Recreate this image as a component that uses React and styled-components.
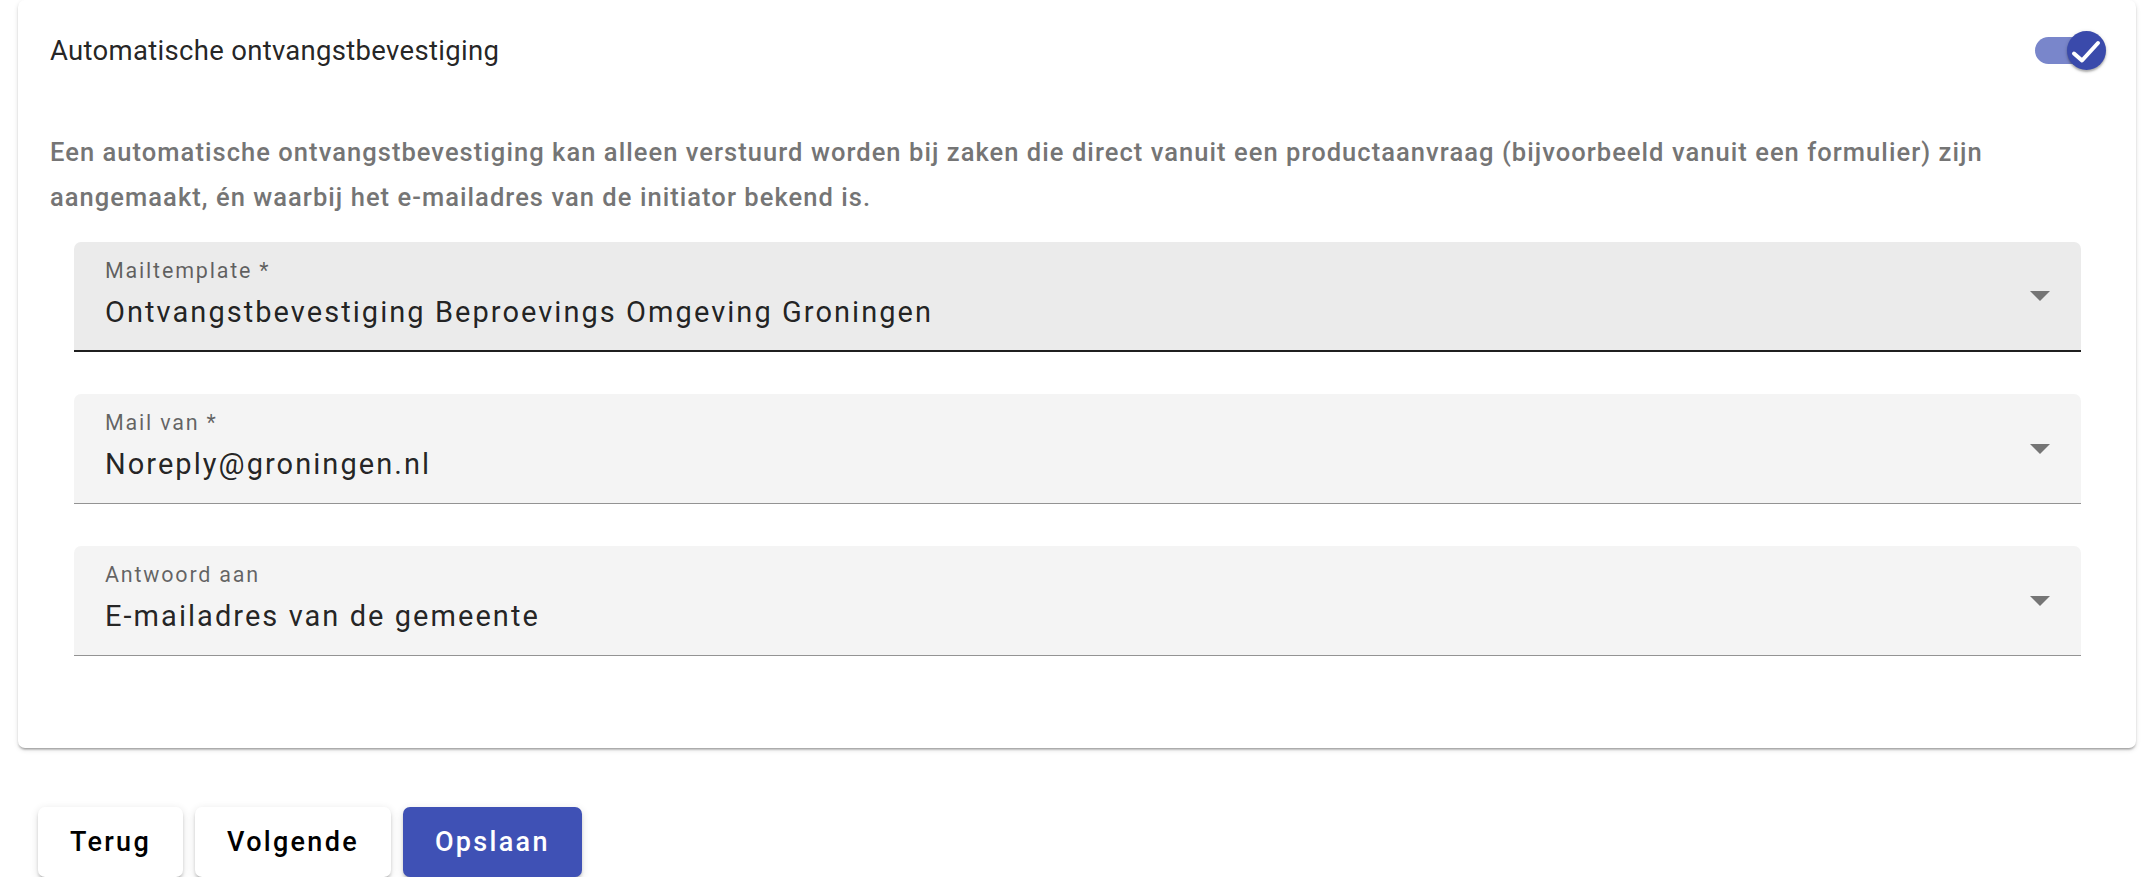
import React from "react";
import styled, { createGlobalStyle } from "styled-components";

const GlobalStyle = createGlobalStyle`
  html, body {
    margin: 0;
    padding: 0;
    background: #ffffff;
    font-family: Roboto, "Liberation Sans", sans-serif;
  }
  * { box-sizing: border-box; }
`;

const Page = styled.div`
  display: flex;
  flex-direction: column;
  padding: 0 15px 0 18px;
`;

const Card = styled.section`
  background: #ffffff;
  border-radius: 7px;
  box-shadow: 0 3px 2px -2px rgba(0, 0, 0, 0.2), 0 2px 2px 0 rgba(0, 0, 0, 0.14),
    0 2px 5px 0 rgba(0, 0, 0, 0.12);
  padding: 0 0 92px;
  display: flex;
  flex-direction: column;
`;

const Header = styled.div`
  height: 100px;
  display: flex;
  align-items: center;
  justify-content: space-between;
  padding: 0 30px 0 32px;
`;

const Title = styled.h2`
  margin: 0;
  font-size: 27.5px;
  font-weight: 400;
  letter-spacing: 0.3px;
  color: rgba(0, 0, 0, 0.87);
`;

const Switch = styled.div`
  position: relative;
  width: 71px;
  height: 39px;
  display: flex;
  align-items: center;
`;

const Track = styled.div`
  width: 65px;
  height: 27px;
  border-radius: 14px;
  background: #7986cb;
`;

const Thumb = styled.div`
  position: absolute;
  right: 0;
  top: 0;
  width: 39px;
  height: 39px;
  border-radius: 50%;
  background: #3a4aab;
  box-shadow: 0 2px 2px rgba(0, 0, 0, 0.25), 0 1px 4px rgba(0, 0, 0, 0.15);
  display: flex;
  align-items: center;
  justify-content: center;
`;

const Description = styled.p`
  margin: 30px 0 0;
  padding: 0 30px 0 32px;
  font-size: 25.5px;
  line-height: 45px;
  font-weight: 500;
  letter-spacing: 1.05px;
  color: #757575;
`;

const Fields = styled.div`
  margin: 22px 55px 0 56px;
  display: flex;
  flex-direction: column;
  gap: 42px;
`;

const Field = styled.div`
  height: 110px;
  display: flex;
  align-items: stretch;
  border-radius: 7px 7px 0 0;
  background: ${(p) => (p.$active ? "#ebebeb" : "#f4f4f4")};
  border-bottom: ${(p) => (p.$active ? "2px solid #1f1f1f" : "1px solid #939393")};
  padding: 17px 31px 0 31px;
`;

const FieldText = styled.div`
  flex: 1;
  display: flex;
  flex-direction: column;
`;

const Label = styled.label`
  font-size: 21.5px;
  line-height: 24px;
  letter-spacing: 1.8px;
  color: rgba(0, 0, 0, 0.6);
`;

const Value = styled.div`
  margin-top: 12px;
  font-size: 29px;
  line-height: 34px;
  letter-spacing: 2.05px;
  color: rgba(0, 0, 0, 0.87);
`;

const ArrowBox = styled.div`
  align-self: center;
  display: flex;
  margin-top: -17px;
`;

const Actions = styled.div`
  margin-top: 59px;
  padding-left: 20px;
  display: flex;
  gap: 12px;
`;

const Button = styled.button`
  height: 70px;
  padding: 0 32px;
  border: none;
  border-radius: 7px;
  font-family: Roboto, "Liberation Sans", sans-serif;
  font-size: 27px;
  font-weight: 500;
  letter-spacing: 2.3px;
  cursor: pointer;
  background: ${(p) => (p.$primary ? "#3f51b5" : "#ffffff")};
  color: ${(p) => (p.$primary ? "#ffffff" : "#000000")};
  box-shadow: 0 4px 2px -3px rgba(0, 0, 0, 0.2), 0 3px 3px 0 rgba(0, 0, 0, 0.14),
    0 2px 8px 0 rgba(0, 0, 0, 0.12);
`;

const ArrowDown = () => (
  <svg width="20" height="10" viewBox="0 0 20 10">
    <path d="M0 0 L10 10 L20 0 Z" fill="#757575" />
  </svg>
);

const Check = () => (
  <svg width="39" height="39" viewBox="0 0 39 39">
    <path
      d="M7 22.5 L15 29.5 L31 12"
      fill="none"
      stroke="#ffffff"
      strokeWidth="4"
      strokeLinecap="round"
      strokeLinejoin="round"
    />
  </svg>
);

const SelectField = ({ label, value, active }) => (
  <Field $active={active}>
    <FieldText>
      <Label>{label}</Label>
      <Value>{value}</Value>
    </FieldText>
    <ArrowBox>
      <ArrowDown />
    </ArrowBox>
  </Field>
);

export default function App() {
  return (
    <>
      <GlobalStyle />
      <Page>
        <Card>
          <Header>
            <Title>Automatische ontvangstbevestiging</Title>
            <Switch>
              <Track />
              <Thumb>
                <Check />
              </Thumb>
            </Switch>
          </Header>
          <Description>
            Een automatische ontvangstbevestiging kan alleen verstuurd worden bij zaken die direct
            vanuit een productaanvraag (bijvoorbeeld vanuit een formulier) zijn aangemaakt, én
            waarbij het e-mailadres van de initiator bekend is.
          </Description>
          <Fields>
            <SelectField
              active
              label="Mailtemplate *"
              value="Ontvangstbevestiging Beproevings Omgeving Groningen"
            />
            <SelectField label="Mail van *" value="Noreply@groningen.nl" />
            <SelectField label="Antwoord aan" value="E-mailadres van de gemeente" />
          </Fields>
        </Card>
        <Actions>
          <Button>Terug</Button>
          <Button>Volgende</Button>
          <Button $primary>Opslaan</Button>
        </Actions>
      </Page>
    </>
  );
}
